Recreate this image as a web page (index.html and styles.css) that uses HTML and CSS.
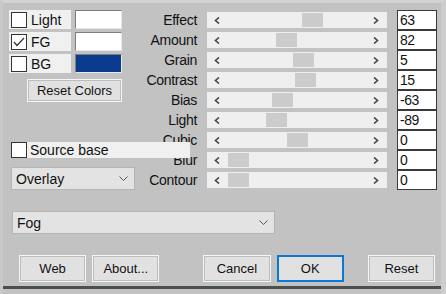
FILE: index.html
```html
<!DOCTYPE html>
<html lang="en">
<head>
    <meta charset="UTF-8" />
    <title>Fog</title>
    <link rel="stylesheet" href="styles.css">
</head>
<body>
    <div class="dialog">
        <div class="top">
            <div class="leftCol">
                <div class="colorRow">
                    <label class="chk"><span class="box"></span>Light</label>
                    <span class="swatch"></span>
                </div>
                <div class="colorRow">
                    <label class="chk"><span class="box"><svg width="14" height="14" viewBox="0 0 14 14"><polyline points="2,7 5,10.5 12,3" fill="none" stroke="#333" stroke-width="1.2"/></svg></span>FG</label>
                    <span class="swatch"></span>
                </div>
                <div class="colorRow">
                    <label class="chk"><span class="box"></span>BG</label>
                    <span class="swatch navy"></span>
                </div>
                <button class="btn resetColors">Reset Colors</button>
                <label class="chk source"><span class="box"></span>Source base</label>
                <div class="select overlay">Overlay<svg class="chev" width="9" height="5" viewBox="0 0 9 5"><polyline points="0.5,0.5 4.5,4.5 8.5,0.5" fill="none" stroke="#555"/></svg></div>
            </div>

            <div class="params" id="params"></div>
        </div>

        <div class="select fog">Fog<svg class="chev" width="9" height="5" viewBox="0 0 9 5"><polyline points="0.5,0.5 4.5,4.5 8.5,0.5" fill="none" stroke="#555"/></svg></div>

        <div class="buttons">
            <button class="btn">Web</button>
            <button class="btn about">About...</button>
            <button class="btn cancel">Cancel</button>
            <button class="btn ok">OK</button>
            <button class="btn reset">Reset</button>
        </div>
        <div class="edge"></div>
    </div>

    <script>
        const params = [
            { name: 'Effect', pos: 95, value: '63' },
            { name: 'Amount', pos: 69, value: '82' },
            { name: 'Grain', pos: 86, value: '5' },
            { name: 'Contrast', pos: 88, value: '15' },
            { name: 'Bias', pos: 65, value: '-63' },
            { name: 'Light', pos: 59, value: '-89' },
            { name: 'Cubic', pos: 80, value: '0' },
            { name: 'Blur', pos: 21, value: '0' },
            { name: 'Contour', pos: 21, value: '0' }
        ];
        const container = document.getElementById('params');
        params.forEach(({ name, pos, value }) => {
            container.innerHTML += `
                <span class="pname">${name}</span>
                <div class="slider">
                    <svg class="arrow arrowL" width="6" height="7" viewBox="0 0 6 7"><polyline points="5,0.5 1.5,3.5 5,6.5" fill="none" stroke="#444" stroke-width="1.6"/></svg>
                    <span class="thumb" style="left: ${pos}px"></span>
                    <svg class="arrow arrowR" width="6" height="7" viewBox="0 0 6 7"><polyline points="1,0.5 4.5,3.5 1,6.5" fill="none" stroke="#444" stroke-width="1.6"/></svg>
                </div>
                <span class="value">${value}</span>
            `;
        });
    </script>
</body>
</html>
```

FILE: styles.css
```css
body {
    margin: 0;
    background: #c4c4c4;
    font-family: 'Liberation Sans', Arial, sans-serif;
    font-size: 13px;
    color: #111;
}

.dialog {
    position: relative;
    width: 446px;
    height: 294px;
    box-sizing: border-box;
    background: #c2c2c2;
    border-top: 3px solid #d2d2d2;
    border-right: 5px solid #cdcdcd;
    border-left: 3px solid #c9c9c9;
    overflow: hidden;
}

.top {
    display: flex;
    padding-top: 7px;
}

.leftCol {
    width: 113px;
    margin-left: 6px;
    display: flex;
    flex-direction: column;
}

.colorRow {
    display: flex;
    justify-content: space-between;
    height: 19px;
    margin-bottom: 3px;
}

.chk {
    display: flex;
    align-items: center;
    gap: 4px;
    width: 62px;
    background: #f0f0f0;
    padding-left: 2px;
    box-sizing: border-box;
    font-size: 14px;
}

.box {
    width: 16px;
    height: 16px;
    box-sizing: border-box;
    border: 1px solid #333;
    background: #fff;
    display: flex;
    align-items: center;
    justify-content: center;
    flex: none;
}

.swatch {
    width: 47px;
    box-sizing: border-box;
    background: #fff;
    border: 1px solid;
    border-color: #7c7c7c #e8e8e8 #e8e8e8 #7c7c7c;
}

.swatch.navy {
    background: #0a3b8d;
}

.btn {
    font-family: inherit;
    font-size: 13px;
    color: #111;
    background: #e1e1e1;
    border: 1px solid #f6f6f6;
    box-shadow: inset 0 0 0 1px #bdbdbd;
    padding: 0;
}

.resetColors {
    margin: 3px 0 0 18px;
    width: 95px;
    height: 23px;
}

.chk.source {
    position: relative;
    z-index: 1;
    width: 179px;
    height: 16px;
    margin: 40px 0 0 2px;
    padding-left: 0;
    gap: 3px;
}

.select {
    position: relative;
    display: flex;
    align-items: center;
    background: #e3e3e3;
    border: 1px solid #b4b4b4;
    box-sizing: border-box;
    height: 23px;
    padding-left: 4px;
    font-size: 14px;
}

.chev {
    position: absolute;
    top: 8px;
}

.overlay {
    width: 124px;
    margin: 9px 0 0 2px;
}

.overlay .chev {
    right: 6px;
}

.fog {
    width: 263px;
    margin: 21px 0 0 9px;
}

.fog .chev {
    right: 6px;
}

.params {
    display: grid;
    grid-template-columns: 62px 180px 40px;
    grid-auto-rows: 20px;
    column-gap: 10px;
    margin-left: 13px;
    align-items: center;
}

.pname {
    text-align: right;
    font-size: 14px;
    letter-spacing: -0.3px;
}

.slider {
    position: relative;
    height: 16px;
    background: #efefef;
}

.arrow {
    position: absolute;
    top: 5px;
}

.arrowL {
    left: 7px;
}

.arrowR {
    right: 8px;
}

.thumb {
    position: absolute;
    top: 1px;
    width: 21px;
    height: 14px;
    background: #cbcbcb;
}

.value {
    height: 20px;
    box-sizing: border-box;
    border: 1px solid #3a3a3a;
    margin-top: -1px;
    background: #fff;
    padding-left: 2px;
    font-size: 14px;
    line-height: 18px;
    letter-spacing: -0.5px;
}

.buttons {
    display: flex;
    margin: 21px 0 0 16px;
}

.buttons .btn {
    width: 68px;
    height: 27px;
    margin-right: 6px;
}

.buttons .about {
    margin-right: 44px;
}

.buttons .ok {
    border: 2px solid #0a78d4;
    box-shadow: none;
    margin-right: 24px;
}

.edge {
    position: absolute;
    left: -3px;
    right: -5px;
    bottom: 5px;
    height: 3px;
    background: #4a514c;
}
```
